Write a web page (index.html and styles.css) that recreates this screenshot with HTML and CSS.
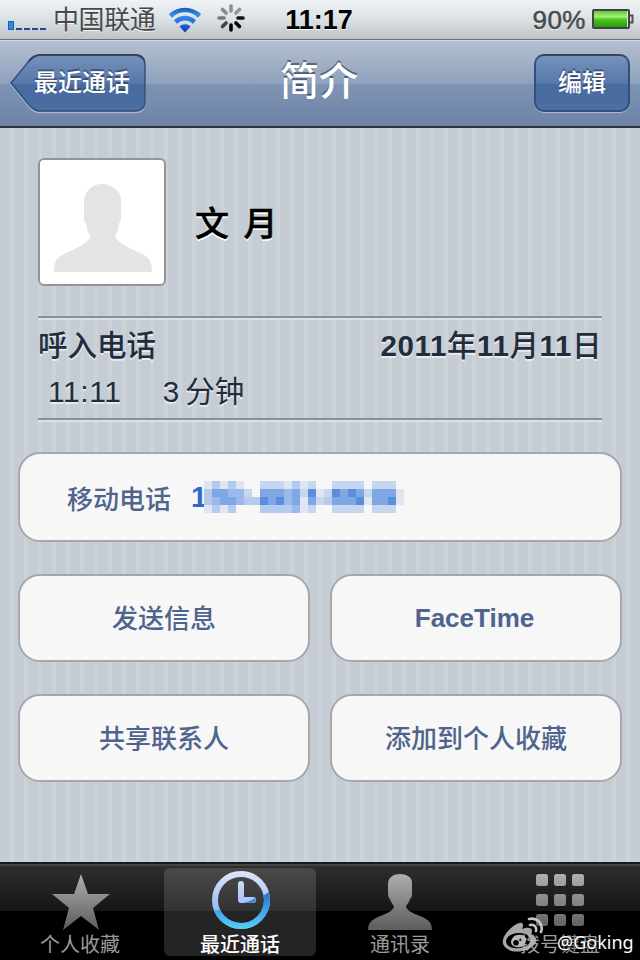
FILE: index.html
```html
<!DOCTYPE html>
<html lang="zh-CN">
<head>
    <meta charset="UTF-8">
    <meta name="viewport" content="width=device-width, initial-scale=1.0">
    <title>简介</title>
    <link rel="stylesheet" href="styles.css">
</head>
<body>
    <div class="status-bar">
        <div class="status-left">
            <svg class="signal" width="40" height="12" viewBox="0 0 40 12">
                <rect x="0.5" y="0.5" width="5" height="8" fill="#2590e6" stroke="#1762b5"/>
                <path d="M8 8h6M16 8h6M24 8h6M32 8h6" stroke="#25439a" stroke-width="2"/>
            </svg>
            <span class="carrier">中国联通</span>
            <svg class="wifi" width="34" height="26" viewBox="0 0 34 26">
                <defs>
                    <linearGradient id="wifi-fill" x1="0" y1="0" x2="0" y2="24" gradientUnits="userSpaceOnUse">
                        <stop offset="0" stop-color="#1554ad"/>
                        <stop offset="0.35" stop-color="#3292ee"/>
                        <stop offset="1" stop-color="#123fc0"/>
                    </linearGradient>
                </defs>
                <g fill="none" stroke="url(#wifi-fill)" stroke-width="4.6">
                    <path d="M2.5 9a20.5 20.5 0 0 1 29 0"/>
                    <path d="M7.6 15a13.3 13.3 0 0 1 18.8 0"/>
                </g>
                <path d="M11.4 19.6a8 8 0 0 1 11.2 0L17 25.5z" fill="url(#wifi-fill)"/>
            </svg>
            <svg class="spinner" width="30" height="30" viewBox="-15 -15 30 30" stroke-width="3.6" stroke-linecap="round">
                <path d="M0 -7V-12" stroke="#8d9092"/>
                <path d="M0 -7V-12" stroke="#929597" transform="rotate(45)"/>
                <path d="M0 -7V-12" stroke="#111" transform="rotate(90)"/>
                <path d="M0 -7V-12" stroke="#000" transform="rotate(135)"/>
                <path d="M0 -7V-12" stroke="#000" transform="rotate(180)"/>
                <path d="M0 -7V-12" stroke="#444" transform="rotate(225)"/>
                <path d="M0 -7V-12" stroke="#777" transform="rotate(270)"/>
                <path d="M0 -7V-12" stroke="#858789" transform="rotate(315)"/>
            </svg>
        </div>
        <div class="clock">11:17</div>
        <div class="status-right">
            <span class="percent">90%</span>
            <svg width="42" height="22" viewBox="0 0 42 22">
                <defs>
                    <linearGradient id="battery-fill" x1="0" y1="0" x2="0" y2="1">
                        <stop offset="0" stop-color="#65c53a"/>
                        <stop offset="0.35" stop-color="#a4ef78"/>
                        <stop offset="0.55" stop-color="#48c51c"/>
                        <stop offset="1" stop-color="#2b9a0b"/>
                    </linearGradient>
                </defs>
                <rect x="1" y="1" width="36" height="18" rx="1" fill="#e1e5e4" stroke="#3e4443" stroke-width="2"/>
                <rect x="2" y="2" width="33" height="16" fill="url(#battery-fill)"/>
                <path d="M38 6.5h2.5v7H38" fill="none" stroke="#4c5254" stroke-width="2"/>
            </svg>
        </div>
    </div>

    <header class="nav-bar">
        <button class="back-btn">
            <svg class="back-shape" width="138" height="62" viewBox="0 0 138 62">
                <defs>
                    <linearGradient id="back-fill" x1="0" y1="0" x2="0" y2="1">
                        <stop offset="0" stop-color="#7791ba"/>
                        <stop offset="0.5" stop-color="#5678ab"/>
                        <stop offset="0.53" stop-color="#486b9f"/>
                        <stop offset="1" stop-color="#4b6ea3"/>
                    </linearGradient>
                </defs>
                <path d="M1 29L19 7Q24 1 30 1H125Q135 1 135 11V47Q135 57 125 57H30Q24 57 19 51Z" fill="none" stroke="#a9b9cf" stroke-width="1.5" transform="translate(0 1.5)"/>
                <path d="M1 29L19 7Q24 1 30 1H125Q135 1 135 11V47Q135 57 125 57H30Q24 57 19 51Z" fill="url(#back-fill)" stroke="#334f7b" stroke-width="1.5"/>
                <path d="M19 7Q24 1 30 1H125Q131 1 134 6" fill="none" stroke="#2f4466" stroke-width="2"/>
            </svg>
            <span>最近通话</span>
        </button>
        <h1>简介</h1>
        <button class="edit-btn">编辑</button>
    </header>

    <main>
        <section class="contact">
            <div class="avatar">
                <svg width="124" height="124" viewBox="0 0 124 124">
                    <path d="M62 24C72 24 80 31 81 39V54C82 59 80 63 79 63C79 70 77 74 75 75C76 78 76 79 80 82C90 90 103 93 108 98Q112 102 112 112H14Q14 102 18 98C24 93 38 89 46 82C50 79 50 78 50 75C48 73 47 70 46 63C44 63 44 59 44 54V41C45 31 52 24 62 24Z" fill="#e4e4e4"/>
                </svg>
            </div>
            <h2>文 月</h2>
        </section>

        <section class="call-log">
            <div class="log-head">
                <span>呼入电话</span>
                <span class="log-date"><b>2011</b>年<b>11</b>月<b>11</b>日</span>
            </div>
            <div class="log-row">
                <span class="log-time">11:11</span>
                <span class="log-length">3 分钟</span>
            </div>
        </section>

        <div class="cell phone">
            <span class="label">移动电话</span>
            <span class="number">1</span>
            <svg class="mosaic" id="mosaic" width="200" height="32" viewBox="0 0 200 32" shape-rendering="crispEdges"></svg>
        </div>

        <div class="actions">
            <button class="cell">发送信息</button>
            <button class="cell facetime">FaceTime</button>
            <button class="cell">共享联系人</button>
            <button class="cell">添加到个人收藏</button>
        </div>
    </main>

    <nav class="tab-bar">
        <svg class="defs" width="0" height="0">
            <defs>
                <linearGradient id="gray-fill" x1="0" y1="4" x2="0" y2="62" gradientUnits="userSpaceOnUse">
                    <stop offset="0" stop-color="#b2b2b2"/>
                    <stop offset="1" stop-color="#5c5c5c"/>
                </linearGradient>
                <linearGradient id="blue-top" x1="0" y1="2" x2="0" y2="60" gradientUnits="userSpaceOnUse">
                    <stop offset="0" stop-color="#dfe7fb"/>
                    <stop offset="1" stop-color="#77a8ee"/>
                </linearGradient>
                <linearGradient id="blue-low" x1="0" y1="26" x2="0" y2="60" gradientUnits="userSpaceOnUse">
                    <stop offset="0" stop-color="#2878da"/>
                    <stop offset="1" stop-color="#52cff5"/>
                </linearGradient>
                <clipPath id="low-half">
                    <path d="M0 43Q36 42 64 22V64H0Z"/>
                </clipPath>
            </defs>
        </svg>
        <a class="tab">
            <svg width="64" height="64" viewBox="0 0 64 64">
                <path d="M33 6L40 26H62L45 40L51 62L33 48L15 62L21 40L4 26H26Z" fill="url(#gray-fill)"/>
            </svg>
            <span>个人收藏</span>
        </a>
        <a class="tab active">
            <svg width="64" height="64" viewBox="0 0 64 64">
                <g fill="none" stroke="url(#blue-top)" stroke-width="6">
                    <circle cx="33" cy="32" r="26"/>
                    <path d="M33 16V32H45" stroke-linecap="round" stroke-linejoin="round"/>
                </g>
                <g fill="none" stroke="url(#blue-low)" stroke-width="6" clip-path="url(#low-half)">
                    <circle cx="33" cy="32" r="26"/>
                </g>
                <path d="M35 35Q43 33 47 30Q49 34 45 35Z" fill="#3f88df"/>
            </svg>
            <span>最近通话</span>
        </a>
        <a class="tab">
            <svg width="64" height="64" viewBox="0 0 64 64">
                <path d="M32 6C38 6 44 9 44 14V25C44 29 43 30 42 31C41 35 38 37 38 39C39 42 43 44 47 46C57 50 64 52 64 62H0C0 52 8 50 17 46C22 44 25 42 26 39C26 37 23 35 22 31C20 30 20 26 20 22V16C20 9 26 6 32 6Z" fill="url(#gray-fill)"/>
            </svg>
            <span>通讯录</span>
        </a>
        <a class="tab">
            <svg width="64" height="64" viewBox="0 0 64 64" fill="url(#gray-fill)">
                <rect x="8" y="6" width="12" height="12" rx="2.5"/>
                <rect x="26" y="6" width="12" height="12" rx="2.5"/>
                <rect x="44" y="6" width="12" height="12" rx="2.5"/>
                <rect x="8" y="26" width="12" height="12" rx="2.5"/>
                <rect x="26" y="26" width="12" height="12" rx="2.5"/>
                <rect x="44" y="26" width="12" height="12" rx="2.5"/>
                <rect x="8" y="46" width="12" height="12" rx="2.5"/>
                <rect x="26" y="46" width="12" height="12" rx="2.5"/>
                <rect x="44" y="46" width="12" height="12" rx="2.5"/>
            </svg>
            <span>拨号键盘</span>
        </a>
    </nav>

    <div class="watermark">
        <svg width="44" height="36" viewBox="0 0 44 36">
            <path fill-rule="evenodd" fill="#b9b9b9" fill-opacity="0.9" d="M18 6C21 5 22 8 20 12C25 10 30 10 30 14C30 16 29 17 30 18C35 20 36 24 32 28C26 35 11 37 4 31C-2 26 1 19 7 13C11 9 15 6 18 6ZM17 16C9 16 4 20 4 25C5 30 11 32 18 31C25 30 29 26 28 22C27 18 23 16 17 16Z"/>
            <path fill-rule="evenodd" fill="#b9b9b9" d="M16 18C21 17 25 20 24 24C23 29 18 31 14 30C9 29 8 25 10 22C11 20 13 18 16 18ZM14 23A2.8 2.8 0 1 0 14 28.6A2.8 2.8 0 1 0 14 23ZM18.5 21.5A1.2 1.2 0 1 0 18.5 24A1.2 1.2 0 1 0 18.5 21.5Z"/>
            <path d="M27 2C35 0 42 7 39 15M28 8C32 7 35 10 34 14" fill="none" stroke="#c4c4c4" stroke-width="2.6" stroke-linecap="round"/>
        </svg>
        <span>@Goking</span>
    </div>

    <script>
        // Shade of each 8px block covering the phone number, 0 = empty
        const rows = [
            '1313100222131200222202220',
            '3554420555452612656525551',
            '3455433656451523555615561',
            '1313000333341200222202220'
        ];
        const shades = ['', '#dfe6f2', '#c6d6ef', '#b4caee', '#9bb9ea', '#7fa6e5', '#5c8ddc'];
        const mosaic = document.getElementById('mosaic');

        rows.forEach((row, y) => {
            [...row].forEach((level, x) => {
                if (level === '0') return;
                const rect = document.createElementNS('http://www.w3.org/2000/svg', 'rect');
                rect.setAttribute('x', x * 8);
                rect.setAttribute('y', y * 8);
                rect.setAttribute('width', 8);
                rect.setAttribute('height', 8);
                rect.setAttribute('fill', shades[level]);
                mosaic.appendChild(rect);
            });
        });
    </script>
</body>
</html>
```
FILE: styles.css
```css
* {
    margin: 0;
    padding: 0;
    box-sizing: border-box;
}

body {
    width: 640px;
    height: 960px;
    display: flex;
    flex-direction: column;
    position: relative;
    overflow: hidden;
    background: #000;
    font-family: "Liberation Sans", "Noto Sans CJK SC", sans-serif;
}

svg {
    display: block;
    flex: none;
}

button {
    border: none;
    background: none;
    font-family: inherit;
}

/* Status bar */
.status-bar {
    height: 40px;
    display: grid;
    grid-template-columns: 1fr auto 1fr;
    align-items: center;
    background: linear-gradient(#eff3f5, #dce1e3 50%, #bdc4c6);
    border-bottom: 1px solid #6b7174;
    font-size: 26px;
    line-height: 38px;
    color: #464a4c;
    text-shadow: 0 1px 0 rgba(255, 255, 255, 0.8);
}

.status-left,
.status-right {
    display: flex;
    align-items: center;
}

.status-left {
    padding-left: 8px;
}

.signal {
    margin-top: 14px;
}

.carrier {
    margin-left: 5px;
    letter-spacing: -0.4px;
}

.wifi {
    margin-left: 13px;
}

.spinner {
    margin: -4px 0 0 14px;
}

.clock {
    padding-right: 2px;
    font-size: 27px;
    font-weight: bold;
    color: #000;
}

.status-right {
    justify-content: flex-end;
    padding-right: 6px;
}

.percent {
    margin-right: 6px;
    letter-spacing: 0.5px;
    -webkit-text-stroke: 0.5px #464a4c;
}

/* Navigation bar */
.nav-bar {
    height: 88px;
    padding: 13px 10px 0;
    display: grid;
    grid-template-columns: 136px 1fr 96px;
    align-items: start;
    background: linear-gradient(#b5c0d0, #8fa1bd 50%, #7f94b4 51%, #6d83a6);
    border-top: 1px solid #d1d9e2;
    border-bottom: 2px solid #2d3541;
    color: #fff;
}

.nav-bar h1 {
    padding-right: 42px;
    text-align: center;
    font-size: 39px;
    font-weight: 500;
    line-height: 56px;
    text-shadow: 0 -2px 0 rgba(40, 50, 68, 0.6);
}

.back-btn,
.edit-btn {
    height: 58px;
    font-size: 24px;
    font-weight: 500;
    line-height: 56px;
    color: #fff;
    text-shadow: 0 -2px 0 rgba(35, 50, 80, 0.6);
}

.back-btn {
    position: relative;
    padding-left: 8px;
}

.back-shape {
    position: absolute;
    top: 0;
    left: 0;
}

.back-btn span {
    position: relative;
}

.edit-btn {
    border: 2px solid #334f7b;
    border-top-color: #2f4466;
    border-radius: 10px;
    line-height: 52px;
    background: linear-gradient(#7791ba, #5678ab 50%, #486b9f 53%, #4b6ea3);
    box-shadow: 0 1px 0 #a9b9cf;
}

/* Content */
main {
    height: 734px;
    padding: 30px 18px 0;
    background: repeating-linear-gradient(90deg, #c5ccd4 0, #c5ccd4 10px, #cbd3d9 10px, #cbd3d9 14px);
}

.contact {
    display: flex;
    align-items: center;
    padding: 0 20px;
    height: 128px;
}

.avatar {
    width: 128px;
    height: 128px;
    background: #fff;
    border: 2px solid #92959a;
    border-radius: 6px;
}

.contact h2 {
    margin: 3px 0 0 29px;
    font-size: 34px;
    font-weight: 500;
    line-height: 50px;
    word-spacing: 5px;
    color: #000;
    -webkit-text-stroke: 0.5px #000;
    text-shadow: 0 2px 0 #fff;
}

.call-log {
    height: 104px;
    margin: 30px 20px 32px;
    padding-top: 5px;
    border-top: 2px solid #898e98;
    border-bottom: 2px solid #898e98;
    box-shadow: 0 2px 0 #dce1e7, inset 0 2px 0 #dce1e7;
    font-size: 30px;
    line-height: 46px;
    color: #232c3d;
    text-shadow: 0 2px 0 rgba(255, 255, 255, 0.6);
}

.log-head {
    display: flex;
    justify-content: space-between;
    font-weight: 500;
    font-size: 29.5px;
}

.log-date {
    letter-spacing: 0.6px;
}

.log-row {
    display: flex;
    gap: 41px;
    padding-left: 10px;
}

.log-time {
    letter-spacing: 0.6px;
}

.log-length {
    font-size: 29.5px;
    word-spacing: -2px;
}

.cell {
    display: flex;
    align-items: center;
    justify-content: center;
    padding-bottom: 3px;
    background: #f7f7f7;
    border: 2px solid #a4a8ad;
    border-radius: 22px;
    font-size: 26px;
    font-weight: 500;
    color: #4f648d;
}

.phone {
    height: 90px;
    padding: 0 0 0 47px;
    justify-content: flex-start;
}

.number {
    margin-left: 20px;
    font-size: 29px;
    font-weight: bold;
    line-height: 40px;
    color: #3069ce;
}

.mosaic {
    margin-left: -3px;
}

.actions {
    display: grid;
    grid-template-columns: 1fr 1fr;
    grid-auto-rows: 88px;
    gap: 32px 20px;
    margin-top: 32px;
}

.facetime {
    padding: 0 3px 0 0;
    font-weight: bold;
}

/* Tab bar */
.tab-bar {
    height: 98px;
    padding: 4px 0;
    display: grid;
    grid-template-columns: repeat(4, 1fr);
    justify-items: center;
    background: linear-gradient(#2f2f2f, #151515 47px, #000 47px);
    border-top: 2px solid #17191c;
    box-shadow: inset 0 2px 0 #444;
}

.defs {
    position: absolute;
}

.tab {
    width: 152px;
    height: 88px;
    display: flex;
    flex-direction: column;
    align-items: center;
    border-radius: 6px;
    font-size: 20px;
    line-height: 26px;
    color: #9b9b9b;
}

.tab.active {
    background: linear-gradient(#494949, #323232 43px, #242424 43px);
    color: #fff;
    font-weight: 500;
}

/* Watermark */
.watermark {
    position: absolute;
    left: 502px;
    top: 917px;
    display: flex;
    color: #fff;
    font: 18px/26px "Noto Sans", sans-serif;
    text-shadow: 0 1px 2px #000;
}

.watermark span {
    margin: 12px 0 0 11px;
}
```
